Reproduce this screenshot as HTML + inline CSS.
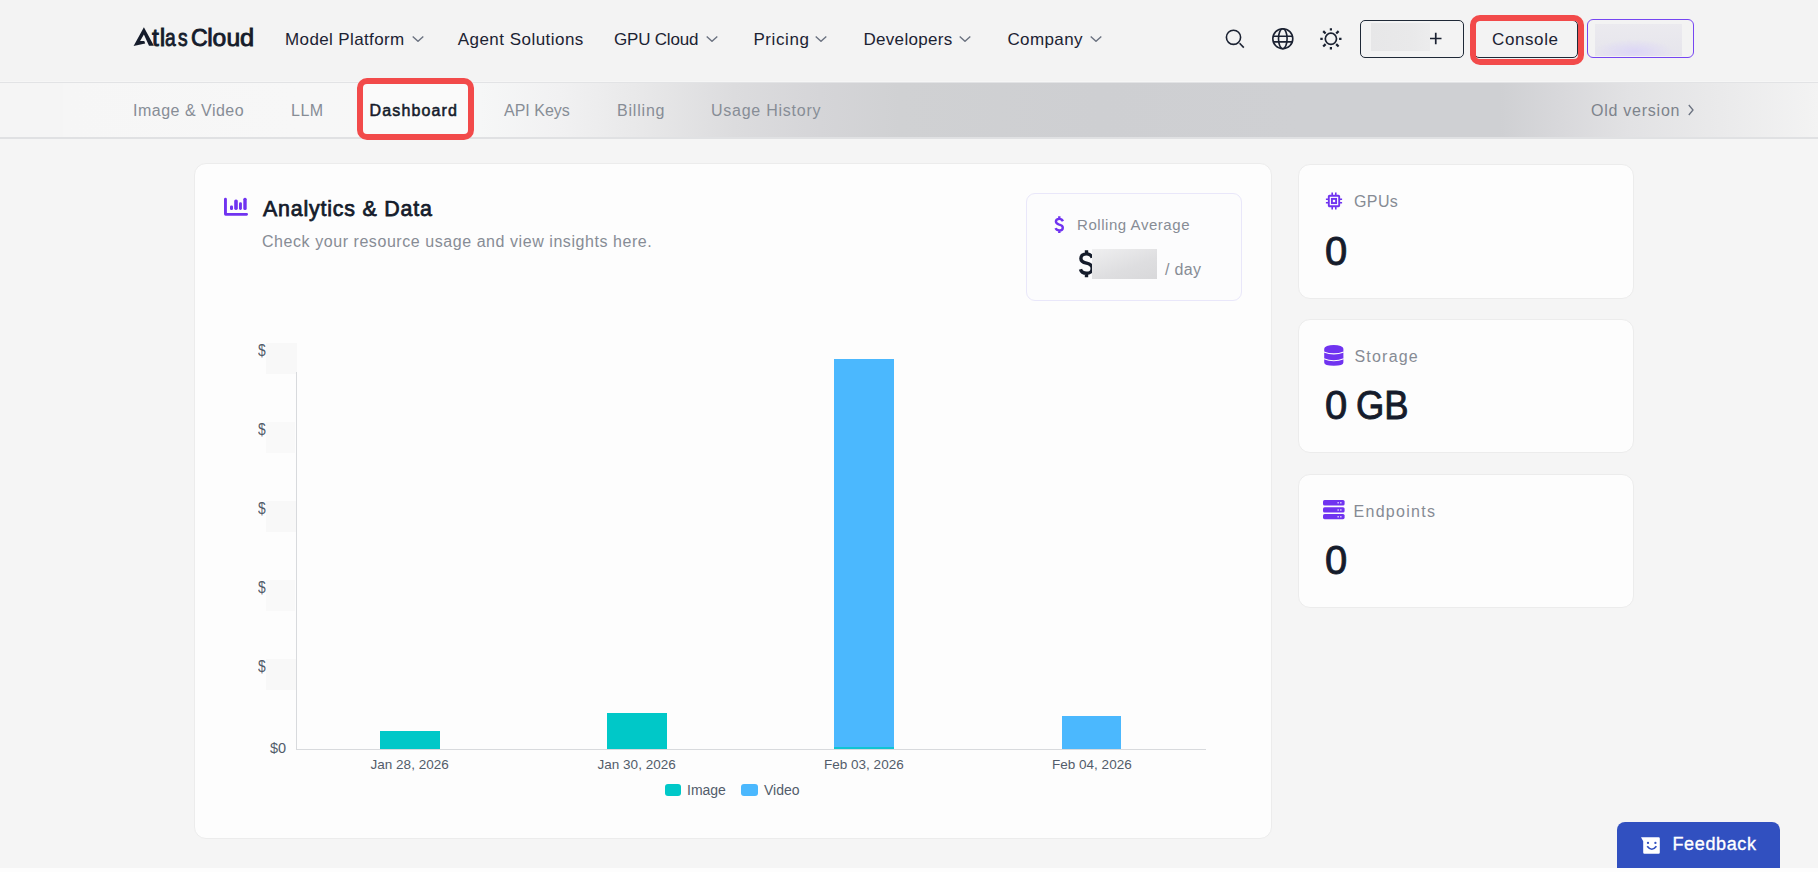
<!DOCTYPE html>
<html><head><meta charset="utf-8">
<style>
html,body{margin:0;padding:0;}
body{width:1818px;height:872px;overflow:hidden;position:relative;background:#f5f5f5;font-family:"Liberation Sans",sans-serif;}
.a{position:absolute;white-space:nowrap;line-height:1;}
#hdr{position:absolute;left:0;top:0;width:1818px;height:81px;background:#f3f3f3;border-bottom:1px solid #f6f6f6;}
#hb{position:absolute;left:0;top:82px;width:1818px;height:1px;background:#e2e3e5;}
#sub{position:absolute;left:0;top:83px;width:1818px;height:54px;border-bottom:2px solid #e0e1e3;
 background:linear-gradient(90deg,#f5f5f5 0px,#f5f5f5 63px,#f6f6f6 63px,#f7f7f7 300px,#f6f7f7 480px,#f1f1f2 560px,#e8e8e9 642px,#dcdcde 734px,#d5d5d8 820px,#d0d1d3 900px,#cecfd2 1100px,#cfd0d3 1300px,#cfd0d3 1500px,#d8d8db 1560px,#e2e2e4 1630px,#eaeaeb 1720px,#f3f3f3 1818px);}
.nav{font-size:17px;color:#1b2232;}
.lg{top:25.7px;font-size:24.7px;color:#151c2b;-webkit-text-stroke:0.9px #151c2b;}
.chev{position:absolute;width:12px;height:6px;}
.sn{font-size:16px;color:#878d96;}
.card{position:absolute;background:#fdfdfd;border:1px solid #ececec;border-radius:12px;box-sizing:border-box;}
.lbl{font-size:16px;color:#868b94;}
.big{font-size:40px;font-weight:400;color:#151c2b;-webkit-text-stroke:0.9px #151c2b;}
.ct{font-size:13.5px;color:#525c6a;}
.yt{font-size:16.5px;color:#525c6a;transform:scaleX(0.84);transform-origin:0 0;}
</style></head><body>
<div id="hdr"></div>
<div id="hb"></div>
<div id="sub"></div>

<!-- logo -->
<svg class="a" style="left:0;top:0" width="160" height="50" viewBox="0 0 160 50"><path d="M143.9 27.2 L153.9 45.7 L149.0 45.7 L143.9 34.4 L140.1 41.0 L144.3 41.0 L145.2 43.6 L133.6 46.0 Z" fill="#151c2b"/></svg>
<div class="a lg" style="left:151.95px;">t</div>
<div class="a lg" style="left:159.65px;">l</div>
<div class="a lg" style="left:164.97px;transform:scaleX(0.78);transform-origin:0 0;">a</div>
<div class="a lg" style="left:177.57px;transform:scaleX(0.78);transform-origin:0 0;">s</div>
<div class="a lg" style="left:191.4px;transform:scaleX(0.935);transform-origin:0 0;">C</div>
<div class="a lg" style="left:207.25px;">l</div>
<div class="a lg" style="left:212.45px;">o</div>
<div class="a lg" style="left:226.45px;">u</div>
<div class="a lg" style="left:240.25px;transform:scaleX(1.03);transform-origin:0 0;">d</div>

<!-- nav -->
<div class="a nav" style="left:285px;top:31.3px;letter-spacing:0.38px;">Model Platform</div>
<svg class="chev" style="left:412px;top:35.5px" viewBox="0 0 12 6"><path d="M0.7 0.6 L6 5.3 L11.3 0.6" fill="none" stroke="#6b7280" stroke-width="1.4"/></svg>
<div class="a nav" style="left:457.7px;top:31.3px;letter-spacing:0.47px;">Agent Solutions</div>
<div class="a nav" style="left:614px;top:31.3px;letter-spacing:-0.2px;">GPU Cloud</div>
<svg class="chev" style="left:706px;top:35.5px" viewBox="0 0 12 6"><path d="M0.7 0.6 L6 5.3 L11.3 0.6" fill="none" stroke="#6b7280" stroke-width="1.4"/></svg>
<div class="a nav" style="left:753.4px;top:31.3px;letter-spacing:0.6px;">Pricing</div>
<svg class="chev" style="left:815px;top:35.5px" viewBox="0 0 12 6"><path d="M0.7 0.6 L6 5.3 L11.3 0.6" fill="none" stroke="#6b7280" stroke-width="1.4"/></svg>
<div class="a nav" style="left:863.4px;top:31.3px;letter-spacing:0.33px;">Developers</div>
<svg class="chev" style="left:959px;top:35.5px" viewBox="0 0 12 6"><path d="M0.7 0.6 L6 5.3 L11.3 0.6" fill="none" stroke="#6b7280" stroke-width="1.4"/></svg>
<div class="a nav" style="left:1007.4px;top:31.3px;letter-spacing:0.4px;">Company</div>
<svg class="chev" style="left:1090px;top:35.5px" viewBox="0 0 12 6"><path d="M0.7 0.6 L6 5.3 L11.3 0.6" fill="none" stroke="#6b7280" stroke-width="1.4"/></svg>

<!-- icons -->
<svg class="a" style="left:1222px;top:26px" width="26" height="26" viewBox="0 0 26 26"><circle cx="11.5" cy="11.3" r="7.1" fill="none" stroke="#1b2232" stroke-width="1.6"/><path d="M17.6 17.3 L21.8 21.6" stroke="#1b2232" stroke-width="1.6"/></svg>
<svg class="a" style="left:1270px;top:26px" width="26" height="26" viewBox="0 0 26 26"><g fill="none" stroke="#1b2232" stroke-width="1.6"><circle cx="12.8" cy="12.7" r="10"/><ellipse cx="12.8" cy="12.7" rx="4.3" ry="10"/><path d="M3.2 10.2 H22.4 M3.2 15.9 H22.4"/></g></svg>
<svg class="a" style="left:1318px;top:26px" width="26" height="26" viewBox="0 0 26 26"><g fill="none" stroke="#1b2232" stroke-width="1.7"><circle cx="12.9" cy="12.8" r="5.6"/><g stroke-width="2.2" stroke-linecap="butt"><path d="M12.9 2.2 V4.6 M12.9 21 V23.4 M2.3 12.8 H4.7 M21.1 12.8 H23.5 M5.2 5.1 L7.6 7.5 M18.2 18.1 L20.6 20.5 M20.6 5.1 L18.2 7.5 M7.6 18.1 L5.2 20.5"/></g></g></svg>

<!-- buttons -->
<div class="a" style="left:1360px;top:20px;width:104px;height:38px;box-sizing:border-box;border:1.3px solid #1f2937;border-radius:5px;"></div>
<div class="a" style="left:1371px;top:23px;width:59px;height:28px;background:linear-gradient(90deg,#e7e7e8,#e9e9ea 70%,#ececed);"></div>
<svg class="a" style="left:1429px;top:32px" width="14" height="14" viewBox="0 0 14 14"><path d="M1 6.5 H12.5 M6.75 0.8 V12.3" stroke="#1b2232" stroke-width="1.7"/></svg>

<div class="a" style="left:1474px;top:19.5px;width:103.5px;height:38.5px;box-sizing:border-box;border:1.3px solid #1f2937;border-radius:5px;"></div>
<div class="a" style="left:1469.5px;top:15px;width:114.5px;height:49.5px;box-sizing:border-box;border:6px solid #f24a4a;border-radius:10px;"></div>
<div class="a nav" style="left:1492px;top:30.6px;letter-spacing:0.6px;">Console</div>

<div class="a" style="left:1587px;top:19px;width:107px;height:39px;box-sizing:border-box;border:1.9px solid #7646f2;border-radius:6px;"></div>
<div class="a" style="left:1594.5px;top:24px;width:87.5px;height:31.5px;background:radial-gradient(ellipse 40px 12px at 45% 85%,#dcd6f6,rgba(230,228,240,0) 100%),linear-gradient(180deg,#ebeaef,#e6e5ec);"></div>

<!-- subnav -->
<div class="a sn" style="left:133px;top:102.7px;letter-spacing:0.5px;">Image &amp; Video</div>
<div class="a sn" style="left:291px;top:102.7px;letter-spacing:0.5px;">LLM</div>
<div class="a" style="left:357px;top:78px;width:117px;height:61.5px;box-sizing:border-box;border:6px solid #f24a4a;border-radius:10px;background:#fafafa;"></div>
<div class="a sn" style="left:369.5px;top:102.7px;color:#151c2b;letter-spacing:1.15px;-webkit-text-stroke:0.55px #151c2b;">Dashboard</div>
<div class="a sn" style="left:504px;top:102.7px;letter-spacing:0px;">API Keys</div>
<div class="a sn" style="left:617px;top:102.7px;letter-spacing:0.8px;">Billing</div>
<div class="a sn" style="left:711px;top:102.7px;letter-spacing:0.75px;">Usage History</div>
<div class="a sn" style="left:1591px;top:102.7px;letter-spacing:0.75px;color:#7d838c;">Old version</div>
<svg class="a" style="left:1687px;top:104px" width="8" height="12" viewBox="0 0 8 12"><path d="M1.8 1 L6 6 L1.8 11" fill="none" stroke="#6b7280" stroke-width="1.3"/></svg>

<!-- main card -->
<div class="card" style="left:194px;top:163px;width:1078px;height:676px;"></div>
<svg class="a" style="left:223px;top:197px" width="26" height="20" viewBox="0 0 26 20"><g fill="#7033f0"><path d="M1 2.2 Q1 0.8 2.45 0.8 Q3.9 0.8 3.9 2.2 V16 H23.7 Q25 16 25 17.35 Q25 18.7 23.7 18.7 H2.6 Q1 18.7 1 17.1 Z"/><rect x="7" y="8.4" width="3" height="4.5" rx="1.2"/><rect x="11.2" y="2.4" width="3.6" height="10.5" rx="1.6"/><rect x="16" y="5.3" width="2.9" height="7.6" rx="1.3"/><rect x="20.3" y="0.8" width="3.4" height="12.1" rx="1.5"/></g></svg>
<div class="a" style="left:263px;top:199.4px;font-size:21.4px;letter-spacing:0.8px;color:#151c2b;-webkit-text-stroke:0.75px #151c2b;">Analytics &amp; Data</div>
<div class="a" style="left:262px;top:234px;font-size:16px;letter-spacing:0.56px;color:#878c95;">Check your resource usage and view insights here.</div>

<!-- rolling average -->
<div class="a" style="left:1026px;top:193px;width:216px;height:108px;box-sizing:border-box;border:1px solid #e9e7fa;border-radius:9px;background:#fcfcfd;"></div>
<svg class="a" style="left:1040px;top:200px" width="70" height="90" viewBox="1040 200 70 90"><g fill="none" stroke-linecap="butt"><path d="M1062.9 221.2 C1062.3 219.7 1061 218.9 1059.3 218.9 C1057.2 218.9 1055.9 220 1055.9 221.6 C1055.9 223.4 1057.5 224.1 1059.3 224.6 C1061.3 225.1 1062.8 225.9 1062.8 227.7 C1062.8 229.4 1061.3 230.4 1059.3 230.4 C1057.4 230.4 1056.1 229.6 1055.6 228.2 M1059.3 216.3 V218.9 M1059.3 230.4 V233.1" stroke="#7033f0" stroke-width="2.4"/><path d="M1091.3 257.8 C1090.4 255.2 1088.4 253.9 1085.6 253.9 C1082.2 253.9 1080 255.7 1080 258.4 C1080 261.3 1082.3 262.4 1085.6 263.2 C1089.1 264 1091.3 265.4 1091.3 268.4 C1091.3 271.4 1088.9 273.3 1085.6 273.3 C1082.5 273.3 1080.3 271.9 1079.6 269.3 M1085.6 250.3 V253.9 M1085.6 273.3 V277.3" stroke="#151c2b" stroke-width="3.4" transform="translate(0.9 0)"/></g></svg>
<div class="a" style="left:1077px;top:216.6px;font-size:15px;letter-spacing:0.55px;color:#878c95;">Rolling Average</div>

<div class="a" style="left:1092px;top:249px;width:65px;height:30px;background:linear-gradient(160deg,#efeff0,#dedee0 60%,#d8d8da);"></div>
<div class="a" style="left:1165px;top:261.8px;font-size:16px;letter-spacing:0.3px;color:#878c95;">/ day</div>

<!-- chart -->
<div class="a yt" style="left:257.5px;top:341.9px;">$</div>
<div class="a yt" style="left:257.5px;top:421.4px;">$</div>
<div class="a yt" style="left:257.5px;top:500.4px;">$</div>
<div class="a yt" style="left:257.5px;top:579.4px;">$</div>
<div class="a yt" style="left:257.5px;top:658.4px;">$</div>
<div class="a" style="left:266px;top:343px;width:31px;height:31px;background:#f8f8f8;"></div>
<div class="a" style="left:266px;top:422px;width:29px;height:31px;background:#f9f9f9;"></div>
<div class="a" style="left:266px;top:501px;width:31px;height:31px;background:#f8f8f8;"></div>
<div class="a" style="left:266px;top:580px;width:29px;height:31px;background:#f9f9f9;"></div>
<div class="a" style="left:266px;top:659px;width:31px;height:31px;background:#f8f8f8;"></div>
<div class="a ct" style="left:270px;top:741px;font-size:14.5px;">$0</div>
<div class="a" style="left:296px;top:372px;width:1.2px;height:377px;background:#d8dadd;"></div>
<div class="a" style="left:296px;top:748.5px;width:910px;height:1.2px;background:#d8dadd;"></div>
<div class="a" style="left:379.6px;top:731.2px;width:60.2px;height:17.5px;background:#00c8c8;"></div>
<div class="a" style="left:607px;top:713.2px;width:59.8px;height:35.5px;background:#00c8c8;"></div>
<div class="a" style="left:834px;top:359.3px;width:60px;height:389.4px;background:#4bb8fe;"></div>
<div class="a" style="left:834px;top:746.8px;width:60px;height:1.8px;background:#10c4d2;"></div>
<div class="a" style="left:1061.5px;top:715.6px;width:59.8px;height:33px;background:#4bb8fe;"></div>
<div class="a ct" style="left:370.6px;top:758px;">Jan 28, 2026</div>
<div class="a ct" style="left:597.6px;top:758px;">Jan 30, 2026</div>
<div class="a ct" style="left:824.1px;top:758px;">Feb 03, 2026</div>
<div class="a ct" style="left:1052.1px;top:758px;">Feb 04, 2026</div>
<div class="a" style="left:664.5px;top:784.3px;width:16.7px;height:11.5px;border-radius:3px;background:#00c8c8;"></div>
<div class="a ct" style="left:687px;top:782.5px;font-size:14px;">Image</div>
<div class="a" style="left:741px;top:784.3px;width:17px;height:11.5px;border-radius:3px;background:#4bb8fe;"></div>
<div class="a ct" style="left:764px;top:782.5px;font-size:14px;">Video</div>

<!-- side cards -->
<div class="card" style="left:1298px;top:163.5px;width:336px;height:135px;"></div>
<div class="card" style="left:1298px;top:318.5px;width:336px;height:134.5px;"></div>
<div class="card" style="left:1298px;top:473.5px;width:336px;height:134.5px;"></div>

<svg class="a" style="left:1324px;top:191px" width="20" height="20" viewBox="0 0 20 20"><g fill="none" stroke="#7033f0"><rect x="4.8" y="4.8" width="10.4" height="10.4" rx="0.8" stroke-width="1.9"/><rect x="7.9" y="7.9" width="4.2" height="4.2" stroke-width="1.9"/><path d="M8.2 1.6V4 M11.8 1.6V4 M8.2 16V18.4 M11.8 16V18.4 M1.9 8.2H4 M1.9 11.8H4 M16 8.2H18.1 M16 11.8H18.1" stroke-width="1.6"/></g></svg>
<div class="a lbl" style="left:1354px;top:193.5px;letter-spacing:0.4px;">GPUs</div>
<div class="a big" style="left:1325px;top:230.5px;">0</div>

<svg class="a" style="left:1323px;top:344px" width="22" height="23" viewBox="0 0 22 23"><path d="M1.2 4.8 A9.6 3.9 0 0 1 20.4 4.8 V18.4 Q20.4 21.7 10.8 21.7 Q1.2 21.7 1.2 18.4 Z" fill="#7033f0"/><path d="M0.8 7.9 Q10.8 11.9 20.8 7.9 M0.8 14.8 Q10.8 18.6 20.8 14.8" fill="none" stroke="#fdfdfd" stroke-width="1.1"/></svg>
<div class="a lbl" style="left:1354.5px;top:348.5px;letter-spacing:1.2px;">Storage</div>
<div class="a big" style="left:1325px;top:385px;">0</div>
<div class="a big" style="left:1355.6px;top:385px;transform:scaleX(0.91);transform-origin:0 0;">GB</div>

<svg class="a" style="left:1322px;top:499px" width="24" height="22" viewBox="0 0 24 22"><g fill="#7033f0"><rect x="1" y="1" width="21.6" height="5.6" rx="1.6"/><rect x="1" y="8.2" width="21.6" height="5.4" rx="1.6"/><rect x="1" y="15" width="21.6" height="5.2" rx="1.6"/></g><g fill="#fff"><rect x="15.5" y="3.2" width="1.3" height="1.2"/><rect x="18.2" y="3.2" width="1.3" height="1.2"/><rect x="15.5" y="10.4" width="1.3" height="1.2"/><rect x="18.2" y="10.4" width="1.3" height="1.2"/><rect x="15.5" y="17.2" width="1.3" height="1.2"/><rect x="18.2" y="17.2" width="1.3" height="1.2"/></g></svg>
<div class="a lbl" style="left:1353.5px;top:503.5px;letter-spacing:1.3px;">Endpoints</div>
<div class="a big" style="left:1325px;top:539.5px;">0</div>

<!-- feedback -->
<div class="a" style="left:1617px;top:822px;width:163px;height:50px;background:#3150c0;border-radius:8px 8px 0 0;"></div>
<svg class="a" style="left:1636px;top:832px" width="28" height="26" viewBox="1636 832 28 26"><path d="M1641 837.2 H1658.6 Q1659.8 837.2 1659.8 838.4 V852.6 Q1659.8 853.8 1658.6 853.8 H1644.4 Q1643.2 853.8 1643.2 852.6 V841.3 Z" fill="#fff"/><circle cx="1648" cy="842.9" r="1.15" fill="#3150c0"/><circle cx="1655.4" cy="842.9" r="1.15" fill="#3150c0"/><path d="M1647.2 846.3 Q1651.8 852.2 1656.4 846.3" fill="none" stroke="#3150c0" stroke-width="1.7"/></svg>
<div class="a" style="left:1672.5px;top:835.2px;font-size:18px;letter-spacing:0.62px;color:#fff;-webkit-text-stroke:0.35px #fff;">Feedback</div>
<div class="a" style="left:0;top:868px;width:1818px;height:4px;background:#fdfdfd;"></div>
</body></html>
